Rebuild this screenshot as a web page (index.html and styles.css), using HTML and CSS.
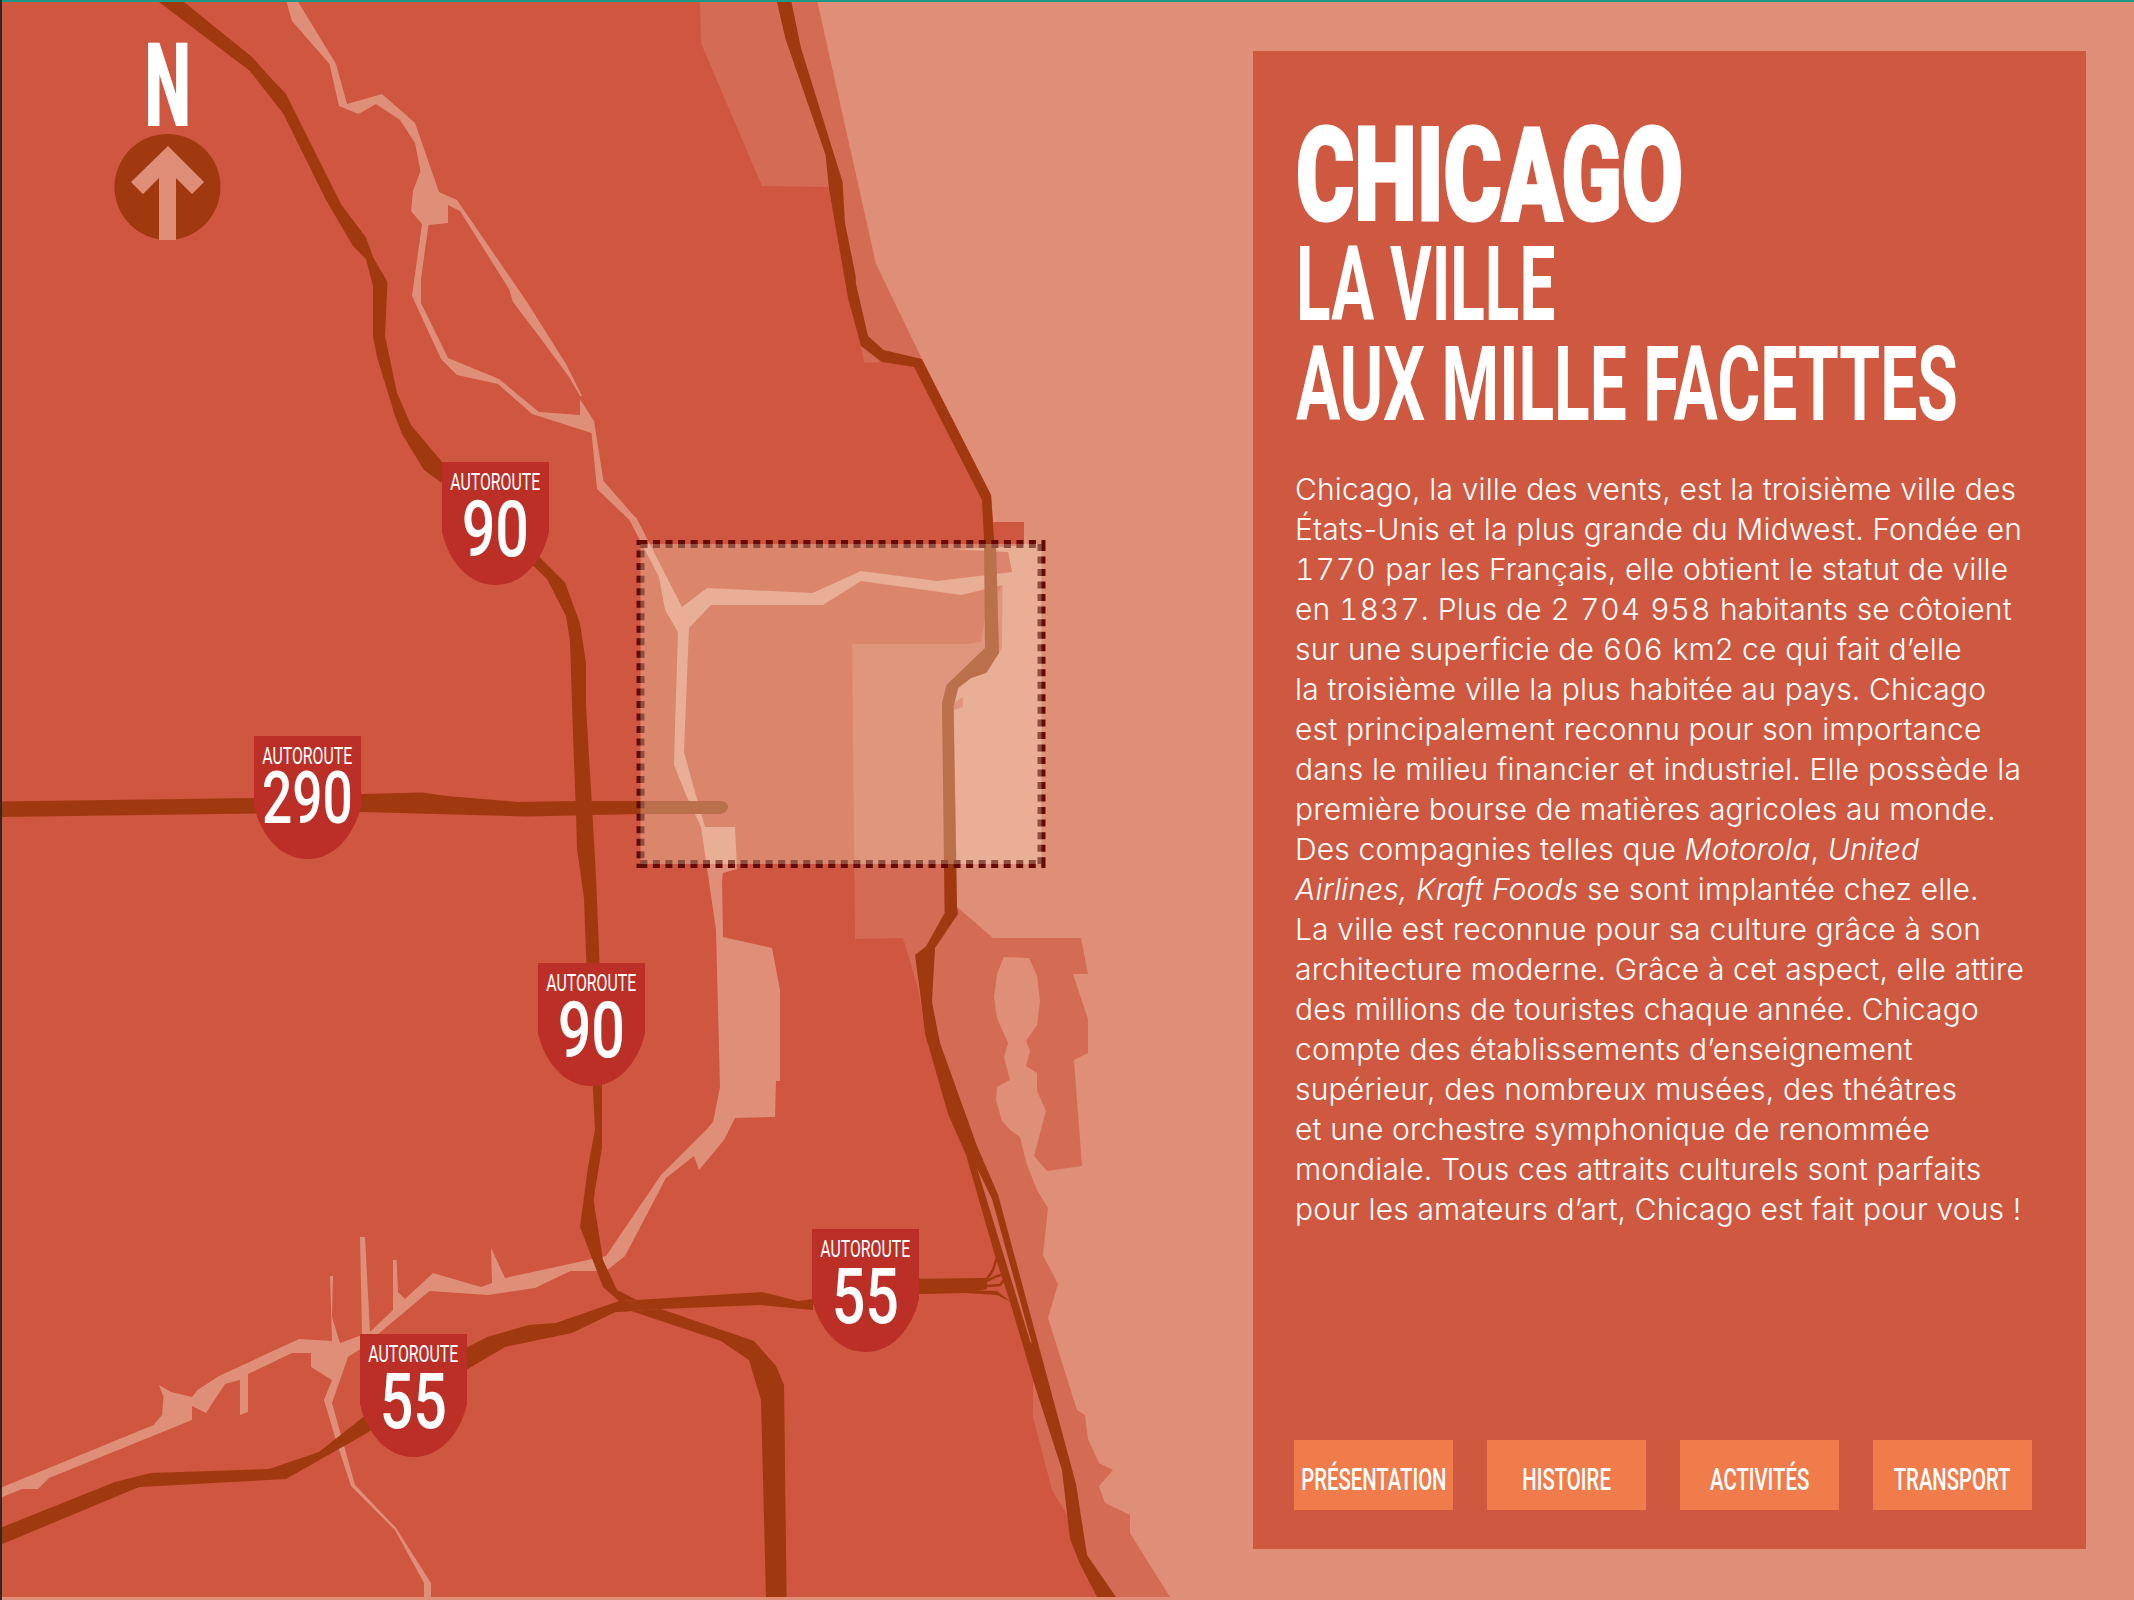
FILE: index.html
```html
<!DOCTYPE html>
<html lang="fr">
<head>
<meta charset="utf-8">
<title>Chicago, la ville aux mille facettes</title>
<link rel="stylesheet" href="styles.css">
</head>
<body>
<main class="page">
  <svg class="map" viewBox="0 0 2134 1600" aria-hidden="true">
    <polygon class="land-mid" points="0,0 817,0 876,264 922,359 991,495 993,522 1024,522 1024,545 1008,552 1012,572 1002.5,585 1002,648 987.5,672 971,678 959,688 954,703 962.5,697 963,707 954,710 957,907 993,938 1081,938 1088,974 1073,974 1088,1019 1088,1053 1074,1060 1082,1166 1047,1171 1034,1156 1046,1111 1037,1091 1037,1073 1026,1066 1030,1051 1026,1041 1037,1025 1040,1002 1037,976 1029,958 1004,957 997,974 994,997 997,1018 1008,1043 1004,1057 1010,1080 997,1087 996,1100 1002,1121 1010,1130 1020,1137 1027,1165 1037,1190 1048,1208 1043,1255 1058,1284 1048,1318 1077,1410 1085,1415 1088,1439 1099,1463 1113,1470 1099,1486 1105,1503 1130,1515 1130,1533 1170,1597 0,1597"/>
    <polygon class="land-red" points="0,0 700,0 701,43 762,186 828,187 861,346 864,363 881,362 922,359 991,495 993,522 1024,522 1024,545 1008,552 1012,572 1002,585 994,600 985,617 981,642 968,644 852,644 855,939 903,938 919,992 925,1034 948,1114 966,1155 995,1256 1010,1302 1033,1380 1033,1417 1052,1490 1070,1520 1080,1564 1097,1597 0,1597"/>
    <polygon class="water" points="286,0 292,21 329.5,64 339,106 358.5,114 376,104 400,120 415,143 420.5,171 413,191 411,211 422,224 412,296 441,359 457,375 498,384 532,414 591.5,433 597,489 629.5,520 659,577 665,610 678,632 675,727 674,765 686,795 701,827 707,868 716,930 720,1087 713,1122 706,1130 661,1175 606,1256 505,1278 491,1248 492,1283 481,1287 433,1273 405,1299 398,1292 396.6,1260 393,1260 393,1310 370,1332 365,1237 360,1237 362,1335 340,1343 332,1317 333,1276 330,1276 332,1341 299,1339 219,1376 197.5,1390 192,1397 171,1392 159,1385 163.5,1397 162,1415 153.6,1425 0,1488 0,1498 22,1489 38,1489 49,1478 192,1420 192,1406 206,1413 225,1384 240,1380 240,1415 248,1412 248,1374 292,1353 311,1353 311,1367 332,1380 324,1400 335,1437 351,1486 395,1530 424,1583 424,1597 431,1597 431,1583 396,1528 355,1485 332,1403 348,1357 359,1350 429.5,1291 488,1295 535,1288 570.5,1271 606,1271 625,1256 666,1178 694,1156 699,1170 724,1140 735,1118 775,1117 776,1081 780,1081 780,990 772,948 723,937 722,880 723,873 737,869 735,827 705,827 695,792 684,752 689,628 711,605 823,605 861,581 961,595 1003,585 1020,585 1020,572 1012,572 937.5,581 861,571 812.5,593 707,588 682,607 636,517 635,517 603.5,481 594,421 578.5,397 582,396 566,364 527,302 457,200 439,192 415,123 382,94 347,104 336,64 297,0"/>
    <polygon class="water" points="952,549 1008,552 1030,552 1030,545 1000,547"/>
    <polygon class="land-red" points="448,205 448,223 428.5,225 421,278.5 421,303 448,358 499,379 539,412 580,415 580,396 569,377 540,337.5 513,302 509,289 460,211"/>

    <polygon class="road" points="159,2 250,71 283.5,114 326,200 353,246 366,259 373,286 373,336 377,357 395,416 402,434 424,470 442,483 470,500 470,480 442,462 411,425 397,393 385,336 387.5,282 373,257 366,237.5 341.5,205 297,116 286,94 268,75 252,57 184,2"/>
    <polygon class="road" points="533.5,566 547,579 566,616 570,641 573,734 576,813 577,848.5 584,898.5 587,980 600,980 599.5,963 596,877 591.5,798.5 586,706 586,663 580,623.5 565,582.5 540,557.5 500,530 500,560"/>
    <polygon class="road" points="592,1070 595,1130 588,1167 580,1227 603,1287 619,1301 637,1300 617,1290 603,1260 593.5,1200 602,1147 602,1070"/>
    <polygon class="road" points="637,1300 762,1292 798,1301 813,1299 813,1310 760,1305 661,1309 631,1311 615.5,1312 619,1301"/>
    <polygon class="road" points="661,1309 754,1341 776,1366 784,1385 786.6,1597 766,1597 761,1400 749,1360 721,1341 631,1311"/>
    <polygon class="road" points="619,1301 556,1323 529,1325 487,1337 466,1348 362,1418 319,1452 269,1469 151,1473 115,1482 0,1528 0,1545 139,1487 286,1479 367,1433 466,1370 505,1347 572,1333 615.5,1312 631,1311"/>
    <path class="road" d="M0 801.500L254.500 798L362 794L422 792.500L446 796L518 802L576 801L721 801Q728 802 728 806.500Q728 812 721 814L638 814L527 816.500L362 812L254 813.500L0 817Z"/>
    <polygon class="road" points="776.500,0 785.500,39 825.600,155 829,189 848,298 861,346 881.500,362 914,367 982,500 984,539 985,648 946.500,685 942,703 944.600,913 926,946.600 915,955 920,992 925,1034 948,1114 966,1155 995,1256 1010,1302 1033,1380 1062,1470 1070,1539 1080,1564 1097,1597 1116,1597 1087,1555 1076,1484 998,1194.500 977,1146 940,1043 932,1002 935,948 958,914 957,907 953.500,707 958,688 971,678 986,673 999,653 996,543 994,539 991,495 921.600,359 883.600,350 868,336 856,284 855.500,275 845,223 842.600,182 801,48 791,0"/>
    <polygon class="road" points="900,1279 987,1278 987,1289 965,1293 900,1294.600"/>
    <polygon class="road" points="965,1290 997,1291 1011,1302 997,1295 965,1293"/>
    <polygon class="slit" points="977,1168 992,1199 1032,1344 1030,1341"/>
    <g class="ramps">
      <polyline points="987,1279 993,1270 997,1257"/>
      <polyline points="987,1281 997,1276 1001,1275"/>
      <polyline points="987,1286 1000,1285 1004,1280"/>
    </g>

    <rect class="focus-line" x="640.500" y="544" width="401" height="320"/>
    <rect class="focus-fill" x="640.500" y="544" width="401" height="320"/>

    <circle class="compass-disc" cx="167.500" cy="187" r="53"/>
    <polygon class="compass-arrow" points="168,146 204,182 192,194 176,178 176,240 159,240 159,178 143,194 131,182"/>

    <rect class="edge-top" width="2134" height="2"/>
    <rect class="edge-left" width="2" height="1600"/>
  </svg>

  <div class="north"><span class="north-n squeeze">N</span></div>

  <div class="shield shield-a"><span class="shield-label squeeze">AUTOROUTE</span><span class="shield-num squeeze">90</span></div>
  <div class="shield shield-b"><span class="shield-label squeeze">AUTOROUTE</span><span class="shield-num shield-num-wide squeeze">290</span></div>
  <div class="shield shield-c"><span class="shield-label squeeze">AUTOROUTE</span><span class="shield-num squeeze">90</span></div>
  <div class="shield shield-d"><span class="shield-label squeeze">AUTOROUTE</span><span class="shield-num squeeze">55</span></div>
  <div class="shield shield-e"><span class="shield-label squeeze">AUTOROUTE</span><span class="shield-num squeeze">55</span></div>

  <section class="panel">
    <h1 class="title">
      <span class="title-main">CHICAGO</span>
      <span class="title-sub title-sub-tight">LA VILLE</span>
      <span class="title-sub">AUX MILLE FACETTES</span>
    </h1>
    <p class="body-copy">Chicago, la ville des vents, est la troisième ville des<br>États-Unis et la plus grande du Midwest. Fondée en<br><span class="num">1770</span> par les Français, elle obtient le statut de ville<br>en <span class="num">1837</span>. Plus de <span class="num">2 704 958</span> habitants se côtoient<br>sur une superficie de <span class="num">606</span> km2 ce qui fait d’elle<br>la troisième ville la plus habitée au pays. Chicago<br>est principalement reconnu pour son importance<br>dans le milieu financier et industriel. Elle possède la<br>première bourse de matières agricoles au monde.<br>Des compagnies telles que <em>Motorola</em>, <em>United<br>Airlines, Kraft Foods</em> se sont implantée chez elle.<br>La ville est reconnue pour sa culture grâce à son<br>architecture moderne. Grâce à cet aspect, elle attire<br>des millions de touristes chaque année. Chicago<br>compte des établissements d’enseignement<br>supérieur, des nombreux musées, des théâtres<br>et une orchestre symphonique de renommée<br>mondiale. Tous ces attraits culturels sont parfaits<br>pour les amateurs d’art, Chicago est fait pour vous !</p>
    <nav class="tabs">
      <a class="tab"><span class="tab-text">PRÉSENTATION</span></a>
      <a class="tab"><span class="tab-text">HISTOIRE</span></a>
      <a class="tab"><span class="tab-text">ACTIVITÉS</span></a>
      <a class="tab"><span class="tab-text">TRANSPORT</span></a>
    </nav>
  </section>
</main>
</body>
</html>
```
FILE: styles.css
```css
* { box-sizing: border-box; }

html, body { margin: 0; padding: 0; }

body {
  background: #df8f78;
  font-family: "Roboto", "Liberation Sans", sans-serif;
  color: #fff;
}

.page {
  position: relative;
  width: 2134px;
  height: 1600px;
  overflow: hidden;
  display: flex;
  justify-content: flex-end;
  padding: 51px 48px;
}

/* Map canvas */
.map { position: absolute; left: 0; top: 0; width: 2134px; height: 1600px; }
.land-mid { fill: #d46c55; }
.land-red { fill: #cf563f; }
.water { fill: #df8f78; }
.road { fill: #a0390f; }
.slit { fill: #d46c55; }
.ramps polyline { fill: none; stroke: #a0390f; stroke-width: 2.5; }
.focus-line { fill: none; stroke: #640a00; stroke-width: 8; stroke-dasharray: 7 5.53; }
.focus-fill { fill: rgba(255, 255, 230, 0.28); }
.compass-disc { fill: #a0390f; }
.compass-arrow { fill: #df8f78; }
.edge-top { fill: #1a9a84; }
.edge-left { fill: #2e2a28; }

/* Condensed text is drawn by squeezing a wider face */
.squeeze { display: inline-block; white-space: nowrap; transform-origin: center; }

.north {
  position: absolute;
  left: 118px;
  top: 29px;
  width: 100px;
  display: flex;
  justify-content: center;
}
.north-n {
  font-size: 116px;
  line-height: 115px;
  font-weight: 900;
  transform: scaleX(0.57);
}

/* Motorway shields, pinned on the map */
.shield {
  position: absolute;
  width: 107px;
  height: 123px;
  padding-top: 8px;
  background: #bc2f26;
  clip-path: path("M0 0H107V70C100 100 80 123 53.5 123C27 123 7 100 0 70Z");
  display: flex;
  flex-direction: column;
  align-items: center;
}
.shield-a { left: 442px; top: 462px; }
.shield-b { left: 254px; top: 736px; }
.shield-c { left: 538px; top: 963px; }
.shield-d { left: 812px; top: 1229px; }
.shield-e { left: 360px; top: 1334px; }

.shield-label {
  font-size: 24px;
  line-height: 24px;
  font-weight: 400;
  transform: scaleX(0.66);
}
.shield-num {
  margin-top: 6px;
  font-size: 78px;
  line-height: 60px;
  font-weight: 500;
  transform: scaleX(0.76);
}
.shield-num-wide { margin-top: 1px; font-size: 72px; transform: scaleX(0.74); }

/* Text panel */
.panel {
  position: relative;
  width: 833px;
  height: 1498px;
  background: #cf5841;
  padding: 66px 54px 39px 41px;
  display: flex;
  flex-direction: column;
}

.title { margin: 0 0 0 2px; font-weight: normal; }
.title-main, .title-sub {
  display: block;
  white-space: nowrap;
  transform-origin: left center;
}
.title-main {
  font-size: 130px;
  line-height: 118px;
  font-weight: 900;
  -webkit-text-stroke: 3px #fff;
  transform: scaleX(0.683);
}
.title-sub {
  font-size: 103px;
  line-height: 100px;
  font-weight: 700;
  transform: scaleX(0.64);
}
.title-sub-tight { transform: scaleX(0.62); }

.body-copy {
  margin: 34px 0 0 1px;
  font-family: "Inter", "Liberation Sans", sans-serif;
  font-size: 30px;
  line-height: 40px;
  font-weight: 300;
  letter-spacing: 0.16px;
  white-space: nowrap;
}
.num { font-feature-settings: "tnum"; letter-spacing: 1px; }

.tabs {
  margin-top: auto;
  display: flex;
  gap: 34px;
}
.tab {
  width: 159px;
  height: 70px;
  padding-top: 10px;
  background: #ef7c4a;
  display: flex;
  align-items: center;
  justify-content: center;
}
.tab-text {
  display: inline-block;
  white-space: nowrap;
  font-size: 31px;
  line-height: 40px;
  font-weight: 500;
  transform: scaleX(0.655);
}
```
